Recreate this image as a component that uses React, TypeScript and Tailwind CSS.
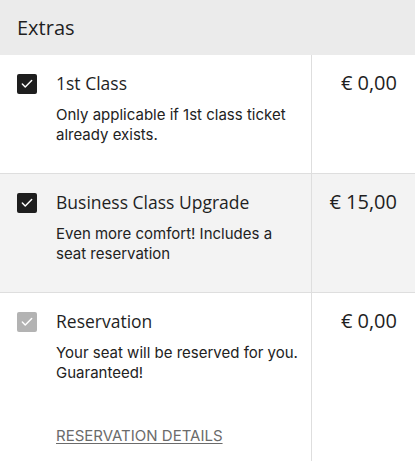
import { Check } from "lucide-react"

type Extra = {
  title: string
  desc: string[]
  price: string
  disabled?: boolean
  shaded?: boolean
  link?: string
}

const extras: Extra[] = [
  { title: "1st Class", desc: ["Only applicable if 1st class ticket", "already exists."], price: "€ 0,00" },
  {
    title: "Business Class Upgrade",
    desc: ["Even more comfort! Includes a", "seat reservation"],
    price: "€ 15,00",
    shaded: true,
  },
  {
    title: "Reservation",
    desc: ["Your seat will be reserved for you.", "Guaranteed!"],
    price: "€ 0,00",
    disabled: true,
    link: "RESERVATION DETAILS",
  },
]

function Checkbox({ disabled }: { disabled?: boolean }) {
  return (
    <div
      className={`w-[20px] h-[20px] rounded-[2px] flex items-center justify-center shrink-0 ${
        disabled ? "bg-[#b3b3b3]" : "bg-[#1e1e1e]"
      }`}
    >
      <Check className="w-[14px] h-[14px] text-white" strokeWidth={2.5} />
    </div>
  )
}

export default function App() {
  return (
    <div className="w-[415px] h-[461px] bg-white overflow-hidden font-['Open_Sans',sans-serif] text-[#1f1f1f]">
      <div className="h-[55px] bg-[#ebebeb] flex items-center pl-[17px] text-[20px]">Extras</div>
      {extras.map((ex, i) => (
        <div
          key={ex.title}
          className={`grid grid-cols-[312px_1fr] ${ex.shaded ? "bg-[#f3f3f3]" : "bg-white"} ${
            i < extras.length - 1 ? "h-[119px] border-b border-[#dedede]" : "h-[169px]"
          }`}
        >
          <div className="border-r border-[#dedede] flex gap-[19px] pl-[17px] pt-[16px]">
            <div className="pt-[3px]">
              <Checkbox disabled={ex.disabled} />
            </div>
            <div className="flex flex-col">
              <div className="text-[17.5px] leading-[24px]">{ex.title}</div>
              <div className="mt-[10px] text-[15px] leading-[20px] font-['Inter',sans-serif] text-[#222]">
                {ex.desc.map((d) => (
                  <div key={d}>{d}</div>
                ))}
              </div>
              {ex.link && (
                <a className="mt-[44px] text-[15px] leading-[18px] font-['Inter',sans-serif] text-[#6b6b6b] underline underline-offset-2">
                  {ex.link}
                </a>
              )}
            </div>
          </div>
          <div className="flex justify-end pr-[18px] pt-[14px] text-[20px] leading-[28px]">{ex.price}</div>
        </div>
      ))}
    </div>
  )
}
